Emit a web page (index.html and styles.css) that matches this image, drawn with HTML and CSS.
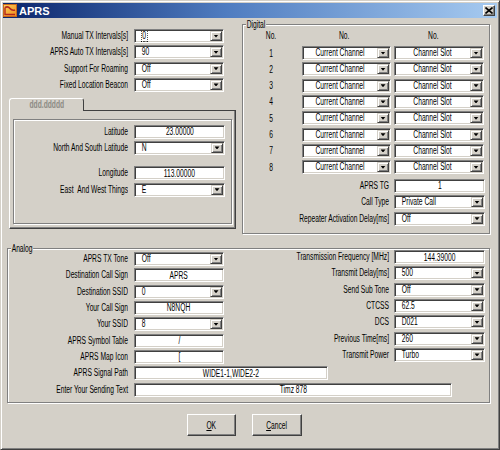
FILE: index.html
```html
<!DOCTYPE html>
<html>
<head>
<meta charset="utf-8">
<title>APRS</title>
<link rel="stylesheet" href="styles.css">
</head>
<body>
<div class="window">
  <div class="titlebar">
    <svg class="ticon" width="14" height="13" viewBox="0 0 14 13">
      <defs>
        <linearGradient id="ig" x1="0" y1="0" x2="1" y2="1">
          <stop offset="0" stop-color="#fbd35a"/>
          <stop offset="1" stop-color="#f08a1c"/>
        </linearGradient>
      </defs>
      <rect x="0.5" y="0.5" width="13" height="12" fill="url(#ig)" stroke="#c8661a"/>
      <path d="M2 3.5 Q5 2 7 4.5 T12 6" fill="none" stroke="#b3261e" stroke-width="1.6"/>
      <path d="M2 3.5 L2 10.5 L12 10.5" fill="none" stroke="#b3261e" stroke-width="1.4"/>
    </svg>
    <span class="ttext">APRS</span>
    <span class="tclose"><svg width="8" height="7" viewBox="0 0 8 7"><path d="M0.5 0.5 L7.5 6.5 M7.5 0.5 L0.5 6.5" stroke="#000" stroke-width="1.6"/></svg></span>
  </div>

  <div class="client">
    <div class="top">
      <div class="left">
        <div class="frow"><span class="lbl">Manual TX Intervals[s]</span><span class="field combo"><span class="val"><span class="focus">0</span></span><span class="dd"></span></span></div>
        <div class="frow"><span class="lbl">APRS Auto TX Intervals[s]</span><span class="field combo"><span class="val">90</span><span class="dd"></span></span></div>
        <div class="frow"><span class="lbl">Support For Roaming</span><span class="field combo"><span class="val">Off</span><span class="dd"></span></span></div>
        <div class="frow"><span class="lbl">Fixed Location Beacon</span><span class="field combo"><span class="val">Off</span><span class="dd"></span></span></div>

        <div class="tabs">
          <div class="tabbar"><span class="tab"><span class="t">ddd.ddddd</span></span><span class="tabfill"></span></div>
          <div class="panel">
            <div class="pinner">
              <div class="frow"><span class="lbl">Latitude</span><span class="field input"><span class="t">23.00000</span></span></div>
              <div class="frow"><span class="lbl">North And South Latitude</span><span class="field combo"><span class="val">N</span><span class="dd"></span></span></div>
              <div class="frow spaced"><span class="lbl">Longitude</span><span class="field input"><span class="t">113.00000</span></span></div>
              <div class="frow"><span class="lbl">East &nbsp;And West Things</span><span class="field combo"><span class="val">E</span><span class="dd"></span></span></div>
            </div>
          </div>
        </div>
      </div>

      <div class="group digital">
        <span class="legend">Digital</span>
        <div class="dhead"><span class="cnum">No.</span><span class="c1 h1">No.</span><span class="c2 h2">No.</span></div>
        <div class="drow"><span class="cnum">1</span><span class="field combo c1 center"><span class="val">Current Channel</span><span class="dd"></span></span><span class="field combo c2 center"><span class="val">Channel Slot</span><span class="dd"></span></span></div>
        <div class="drow"><span class="cnum">2</span><span class="field combo c1 center"><span class="val">Current Channel</span><span class="dd"></span></span><span class="field combo c2 center"><span class="val">Channel Slot</span><span class="dd"></span></span></div>
        <div class="drow"><span class="cnum">3</span><span class="field combo c1 center"><span class="val">Current Channel</span><span class="dd"></span></span><span class="field combo c2 center"><span class="val">Channel Slot</span><span class="dd"></span></span></div>
        <div class="drow"><span class="cnum">4</span><span class="field combo c1 center"><span class="val">Current Channel</span><span class="dd"></span></span><span class="field combo c2 center"><span class="val">Channel Slot</span><span class="dd"></span></span></div>
        <div class="drow"><span class="cnum">5</span><span class="field combo c1 center"><span class="val">Current Channel</span><span class="dd"></span></span><span class="field combo c2 center"><span class="val">Channel Slot</span><span class="dd"></span></span></div>
        <div class="drow"><span class="cnum">6</span><span class="field combo c1 center"><span class="val">Current Channel</span><span class="dd"></span></span><span class="field combo c2 center"><span class="val">Channel Slot</span><span class="dd"></span></span></div>
        <div class="drow"><span class="cnum">7</span><span class="field combo c1 center"><span class="val">Current Channel</span><span class="dd"></span></span><span class="field combo c2 center"><span class="val">Channel Slot</span><span class="dd"></span></span></div>
        <div class="drow"><span class="cnum">8</span><span class="field combo c1 center"><span class="val">Current Channel</span><span class="dd"></span></span><span class="field combo c2 center"><span class="val">Channel Slot</span><span class="dd"></span></span></div>
        <div class="dtail">
          <div class="frow"><span class="lbl">APRS TG</span><span class="field input"><span class="t">1</span></span></div>
          <div class="frow"><span class="lbl">Call Type</span><span class="field combo"><span class="val">Private Call</span><span class="dd"></span></span></div>
          <div class="frow"><span class="lbl">Repeater Activation Delay[ms]</span><span class="field combo"><span class="val">Off</span><span class="dd"></span></span></div>
        </div>
      </div>
    </div>

    <div class="group analog">
      <span class="legend">Analog</span>
      <div class="acols">
        <div class="acol aleft">
          <div class="frow"><span class="lbl">APRS TX Tone</span><span class="field combo"><span class="val">Off</span><span class="dd"></span></span></div>
          <div class="frow"><span class="lbl">Destination Call Sign</span><span class="field input"><span class="t">APRS</span></span></div>
          <div class="frow"><span class="lbl">Destination SSID</span><span class="field combo"><span class="val">0</span><span class="dd"></span></span></div>
          <div class="frow"><span class="lbl">Your Call Sign</span><span class="field input"><span class="t">N8NQH</span></span></div>
          <div class="frow"><span class="lbl">Your SSID</span><span class="field combo"><span class="val">8</span><span class="dd"></span></span></div>
          <div class="frow"><span class="lbl">APRS Symbol Table</span><span class="field input"><span class="t">/</span></span></div>
          <div class="frow"><span class="lbl">APRS Map Icon</span><span class="field input"><span class="t">[</span></span></div>
        </div>
        <div class="acol aright">
          <div class="frow"><span class="lbl">Transmission Frequency [MHz]</span><span class="field input"><span class="t">144.39000</span></span></div>
          <div class="frow"><span class="lbl">Transmit Delay[ms]</span><span class="field combo"><span class="val">500</span><span class="dd"></span></span></div>
          <div class="frow"><span class="lbl">Send Sub Tone</span><span class="field combo"><span class="val">Off</span><span class="dd"></span></span></div>
          <div class="frow"><span class="lbl">CTCSS</span><span class="field combo"><span class="val">62.5</span><span class="dd"></span></span></div>
          <div class="frow"><span class="lbl">DCS</span><span class="field combo"><span class="val">D021</span><span class="dd"></span></span></div>
          <div class="frow"><span class="lbl">Previous Time[ms]</span><span class="field combo"><span class="val">260</span><span class="dd"></span></span></div>
          <div class="frow"><span class="lbl">Transmit Power</span><span class="field combo"><span class="val">Turbo</span><span class="dd"></span></span></div>
        </div>
      </div>
      <div class="afull">
        <div class="frow"><span class="lbl">APRS Signal Path</span><span class="field input wpath"><span class="t">WIDE1-1,WIDE2-2</span></span></div>
        <div class="frow"><span class="lbl">Enter Your Sending Text</span><span class="field input wtext"><span class="t">Timz 878</span></span></div>
      </div>
    </div>

    <div class="btnrow">
      <span class="pbtn bok"><span class="t"><u>O</u>K</span></span>
      <span class="pbtn bcancel"><span class="t"><u>C</u>ancel</span></span>
    </div>
  </div>
</div>
</body>
</html>
```

FILE: styles.css
```css
* { box-sizing: border-box; }

body {
  margin: 0;
  font-family: "Liberation Sans", Arial, sans-serif;
  font-size: 10px;
  color: #000;
  background: #fff;
}

/* the dialog's font is a tall, narrow sans: condense the glyphs */
.lbl, .val, .t, .legend, .cnum, .h1, .h2 {
  transform: scaleX(0.67);
}
.lbl { transform-origin: right center; }
.val, .legend { transform-origin: left center; }
.t, .cnum, .h1, .h2, .combo.center .val { transform-origin: center; }

.window {
  width: 500px;
  height: 450px;
  background: #d4d0c8;
  border: 1px solid;
  border-color: #d4d0c8 #404040 #404040 #d4d0c8;
  box-shadow: inset 1px 1px #fff, inset -1px -1px #808080;
  padding: 2px;
  display: flex;
  flex-direction: column;
}

/* title bar */
.titlebar {
  flex: none;
  height: 15px;
  display: flex;
  align-items: center;
  background: linear-gradient(90deg, #0a246a 0%, #4f7cc0 45%, #a6caf0 100%);
}
.ticon { flex: none; }
.ttext {
  margin-left: 2px;
  font-weight: bold;
  font-size: 11px;
  color: #fff;
}
.tclose {
  margin-left: auto;
  margin-right: 2px;
  width: 12px;
  height: 11px;
  background: #d4d0c8;
  border: 1px solid;
  border-color: #fff #404040 #404040 #fff;
  box-shadow: inset -1px -1px #808080;
  display: flex;
  align-items: center;
  justify-content: center;
}
.tclose svg { display: block; }

.client {
  flex: 1;
  padding: 0 7px 0 4px;
}

/* generic rows */
.frow {
  display: flex;
  align-items: center;
  height: 14px;
  margin-bottom: 2.33px;
}
.lbl {
  flex: none;
  width: var(--lw, 121px);
  text-align: right;
  white-space: nowrap;
  line-height: 14px;
}
.frow .field {
  margin-left: var(--gap, 6px);
  width: var(--fw, 90px);
}

/* sunken field */
.field {
  flex: none;
  height: 14px;
  background: #fff;
  border: 1px solid;
  border-color: #808080 #fff #fff #808080;
  box-shadow: inset 1px 1px #404040, inset -1px -1px #d4d0c8;
  display: flex;
  align-items: center;
  white-space: nowrap;
  overflow: hidden;
}
.input { justify-content: center; }
.combo .val {
  flex: 1;
  padding-left: 10px;
  line-height: 12px;
}
.combo.center .val { text-align: center; padding-left: 0; }
.focus { outline: 1px dotted #000; padding: 0 1px; }
.dd {
  flex: none;
  width: 12px;
  height: 10px;
  margin-right: 1px;
  background: #d4d0c8;
  border: 1px solid;
  border-color: #d4d0c8 #404040 #404040 #d4d0c8;
  box-shadow: inset 1px 1px #fff, inset -1px -1px #808080;
  display: flex;
  align-items: center;
  justify-content: center;
}
.dd::after {
  content: "";
  width: 5px;
  height: 3px;
  background: #000;
  clip-path: polygon(0 0, 100% 0, 50% 100%);
}

/* top area */
.top {
  display: flex;
  margin-top: 6px;
  height: 210px;
}
.left {
  flex: none;
  width: 229px;
  margin-right: 6px;
  padding-top: 5px;
}

/* tab control */
.tabs { margin-top: 5.67px; margin-left: 2px; width: 227px; }
.tabbar { display: flex; height: 13px; }
.tab {
  flex: none;
  width: 75px;
  height: 13px;
  border: 1px solid;
  border-bottom: none;
  border-color: #fff #404040 transparent #fff;
  border-radius: 3px 3px 0 0;
  display: flex;
  justify-content: center;
  line-height: 11px;
  color: #8c8a84;
  font-weight: bold;
}
.tabfill { flex: 1; border-bottom: 1px solid #404040; }
.panel {
  height: 118px;
  border-style: solid;
  border-width: 0 1px 1px 1px;
  border-color: transparent #404040 #404040 #fff;
  box-shadow: inset -1px -1px #808080;
  padding: 8px 3px 4px 3px;
}
.pinner {
  height: 100%;
  border: 1px solid #808080;
  box-shadow: inset 1px 1px #fff, 1px 1px #fff;
  padding-top: 5px;
  --lw: 114px;
  --fw: 91px;
}
.frow.spaced { margin-top: 11.33px; }

/* group boxes */
.group {
  position: relative;
  border: 1px solid #808080;
  box-shadow: inset 1px 1px #fff, 1px 1px #fff;
}
.legend {
  position: absolute;
  top: -6px;
  left: 3px;
  padding: 0 1px;
  line-height: 11px;
  background: #d4d0c8;
}

.digital {
  flex: none;
  width: 248px;
  height: 210px;
  padding-top: 4px;
}
.dhead, .drow { display: flex; align-items: center; }
.dhead { height: 12px; margin-bottom: 5px; }
.drow { height: 14px; margin-bottom: 2.33px; }
.cnum { flex: none; width: 56px; text-align: center; }
.c1 { flex: none; width: 89px; margin-left: 3px; }
.c2 { flex: none; width: 90px; margin-left: 3px; }
.dhead .c1, .dhead .c2 { text-align: center; }
.h1 { padding-right: 7px; }
.h2 { padding-right: 17px; }
.dtail {
  margin-top: 4.33px;
  --lw: 146px;
  --gap: 5px;
  --fw: 91px;
}
.dtail .frow { margin-bottom: 2.5px; }

.analog {
  margin-top: 14px;
  width: 483px;
  height: 155px;
  padding-top: 1px;
}
.acols { display: flex; align-items: flex-start; }
.aleft { flex: none; width: 224px; padding-top: 2px; --lw: 120px; }
.aright { flex: 1; --lw: 157px; --gap: 5px; --fw: 91px; }
.afull { --lw: 120px; }
.frow .wpath { width: 194px; }
.frow .wtext { width: 318px; }

/* buttons */
.btnrow {
  display: flex;
  justify-content: center;
  gap: 16px;
  margin-top: 11px;
  margin-right: 8px;
}
.pbtn {
  height: 22px;
  background: #d4d0c8;
  border: 1px solid;
  border-color: #fff #404040 #404040 #fff;
  box-shadow: inset -1px -1px #808080;
  display: flex;
  align-items: center;
  justify-content: center;
}
.bok { width: 49px; }
.bcancel { width: 50px; }
```
